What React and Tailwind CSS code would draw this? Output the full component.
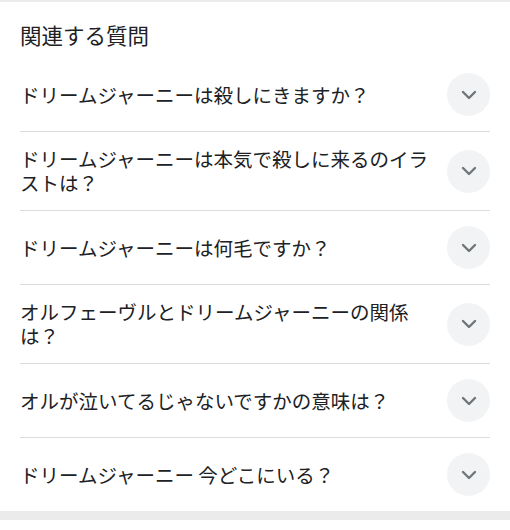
const questions = [
  "ドリームジャーニーは殺しにきますか？",
  "ドリームジャーニーは本気で殺しに来るのイラストは？",
  "ドリームジャーニーは何毛ですか？",
  "オルフェーヴルとドリームジャーニーの関係は？",
  "オルが泣いてるじゃないですかの意味は？",
  "ドリームジャーニー 今どこにいる？",
];

function Chevron() {
  return (
    <svg width="16" height="10" viewBox="0 0 16 10" fill="none">
      <path
        d="M2 2l6 6 6-6"
        stroke="#70757a"
        strokeWidth="2.4"
        strokeLinecap="round"
        strokeLinejoin="round"
      />
    </svg>
  );
}

export default function App() {
  return (
    <div
      className="w-[510px] h-[530px] bg-white text-[#202124]"
      style={{ fontFamily: '"Noto Sans CJK JP", "Noto Sans", sans-serif' }}
    >
      <div className="h-[2px] bg-[#ebebeb]" />

      <div className="px-5 pt-[19px] pb-[9px]">
        <h2 className="text-[21.5px] leading-[28px] font-normal">関連する質問</h2>
      </div>

      <div className="px-5">
        {questions.map((q, i) => (
          <div
            key={i}
            className={
              "flex items-center gap-3 py-[15px] " +
              (i < questions.length - 1 ? "border-b border-[#dadce0]" : "")
            }
          >
            <p className="flex-1 text-[19.5px] leading-[24px]">{q}</p>
            <div className="w-[43px] h-[43px] shrink-0 rounded-full bg-[#f1f3f4] flex items-center justify-center">
              <Chevron />
            </div>
          </div>
        ))}
      </div>

      <div className="h-[9px] bg-[#ebebeb]" />
    </div>
  );
}
